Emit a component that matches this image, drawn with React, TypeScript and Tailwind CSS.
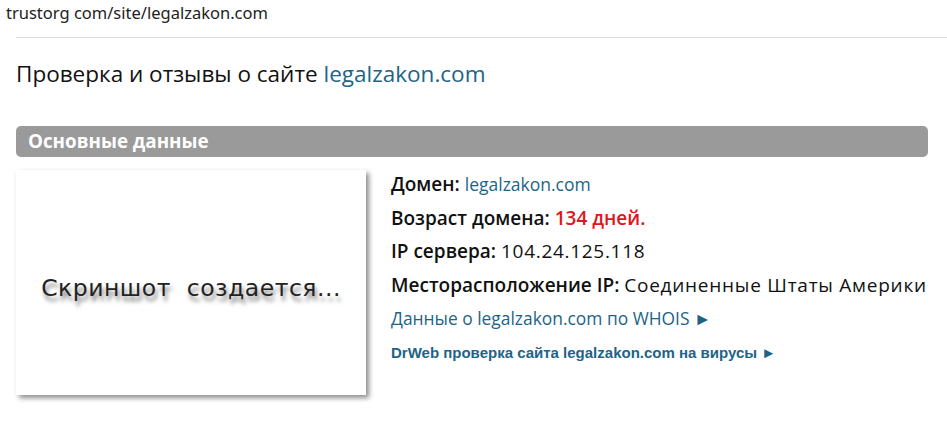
export default function App() {
  return (
    <div className="h-[435px] w-[947px] overflow-hidden bg-white font-['Open_Sans',sans-serif] text-[#111]">
      <div className="px-[6px] pt-[2px] font-['Noto_Sans',sans-serif] text-[16.5px] leading-[22px] text-[#222]">
        trustorg com/site/legalzakon.com
      </div>
      <div className="ml-4 mt-[13px] border-t border-[#dedede]" />

      <div className="px-4">
        <h1 className="mt-[21px] text-[22.5px] leading-[30px] text-[#111]">
          Проверка и отзывы о сайте <a className="text-[#1d6487]">legalzakon.com</a>
        </h1>

        <div className="mr-[3px] mt-[37px] rounded-[5px] bg-[#9a9a9a] px-3 text-[18.8px] font-bold leading-[31px] text-white">
          Основные данные
        </div>

        <div className="mt-[13px] flex gap-[25px]">
          <div className="flex h-[225px] w-[350px] shrink-0 items-center justify-center bg-white pt-[12px] shadow-[3px_3px_5px_rgba(0,0,0,0.45)]">
            <span className="font-['DejaVu_Sans',sans-serif] text-[23.5px] tracking-[0.5px] text-[#222] [text-shadow:2px_5px_4px_rgba(0,0,0,0.5)]">
              Скриншот&nbsp;&nbsp;создается...
            </span>
          </div>

          <div className="-mt-[2px] flex flex-col text-[19px] leading-[33.5px]">
            <div>
              <span className="font-semibold">Домен:</span>{' '}
              <a className="text-[17.5px] text-[#1d6487]">legalzakon.com</a>
            </div>
            <div>
              <span className="font-semibold">Возраст домена:</span>{' '}
              <span className="font-semibold text-[#e0161b]">134 дней.</span>
            </div>
            <div>
              <span className="font-semibold">IP сервера:</span>{' '}
              <span className="tracking-[0.7px]">104.24.125.118</span>
            </div>
            <div className="whitespace-nowrap">
              <span className="font-semibold">Месторасположение IP:</span>{' '}
              <span className="tracking-[0.75px]">Соединенные Штаты Америки</span>
            </div>
            <a className="text-[17.4px] text-[#1d6487]">Данные о legalzakon.com по WHOIS ►</a>
            <a className="font-['Liberation_Sans',sans-serif] text-[15px] font-bold text-[#1d6487]">
              DrWeb проверка сайта legalzakon.com на вирусы ►
            </a>
          </div>
        </div>
      </div>
    </div>
  );
}
